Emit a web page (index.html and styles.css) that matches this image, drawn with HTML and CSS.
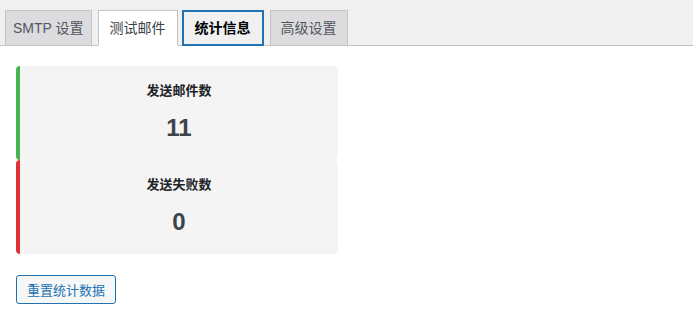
FILE: index.html
```html
<!DOCTYPE html>
<html lang="zh-CN">
<head>
  <meta charset="UTF-8">
  <meta name="viewport" content="width=device-width, initial-scale=1.0">
  <title>统计信息</title>
  <link rel="stylesheet" href="styles.css">
</head>
<body>

  <nav class="tab-bar">
    <a class="tab">SMTP 设置</a>
    <a class="tab tab-light">测试邮件</a>
    <a class="tab tab-active">统计信息</a>
    <a class="tab">高级设置</a>
  </nav>

  <div class="stats">
    <div class="stat-card stat-sent">
      <h3>发送邮件数</h3>
      <p class="stat-num">11</p>
    </div>
    <div class="stat-card stat-failed">
      <h3>发送失败数</h3>
      <p class="stat-num">0</p>
    </div>
  </div>

  <button class="reset-btn">重置统计数据</button>

</body>
</html>
```

FILE: styles.css
```css
body {
  margin: 0;
  background-color: #fff;
  color: #1d2327;
  font-family: "Noto Sans CJK SC", "Noto Sans", sans-serif;
}

.tab-bar {
  display: flex;
  gap: 6px;
  padding: 10px 0 0 5px;
  background-color: #f0f0f1;
  border-bottom: 1px solid #c3c4c7;
  box-sizing: border-box;
  height: 46px;
}

.tab {
  display: block;
  padding: 0 11px;
  height: 36px;
  line-height: 34px;
  font-family: "Liberation Sans", "Noto Sans CJK SC", sans-serif;
  font-size: 14px;
  color: #50575e;
  background-color: #dcdcde;
  border: 1px solid #c3c4c7;
  box-sizing: border-box;
  margin-bottom: -1px;
}

.tab:first-child {
  padding: 0 7px;
}

.tab:last-child {
  padding: 0 10px;
}

.tab-light {
  background-color: #fff;
  border-bottom-color: #fff;
  color: #3c434a;
}

.tab-active {
  background-color: #f0f0f1;
  border: 2px solid #2271b1;
  line-height: 32px;
  color: #000;
  font-weight: bold;
  margin-left: -2px;
}

.stats {
  margin: 20px 0 0 16px;
  width: 322px;
}

.stat-card {
  background-color: #f4f4f4;
  border-left: 4px solid #46b450;
  border-radius: 4px;
  height: 94px;
  box-sizing: border-box;
  padding-top: 15px;
  text-align: center;
}

.stat-failed {
  border-left-color: #dc3232;
}

.stat-card h3 {
  margin: 0;
  font-size: 13px;
  line-height: 18px;
  font-weight: 600;
  color: #1d2327;
}

.stat-num {
  margin: 14px 0 0;
  font-family: "Liberation Sans", sans-serif;
  font-size: 24px;
  line-height: 30px;
  font-weight: bold;
  color: #3c434a;
}

.reset-btn {
  display: block;
  margin: 21px 0 0 16px;
  width: 100px;
  height: 29px;
  padding: 0;
  font-family: "Noto Sans CJK SC", sans-serif;
  font-size: 13px;
  color: #2271b1;
  background-color: #f6f7f7;
  border: 1px solid #2271b1;
  border-radius: 3px;
  cursor: pointer;
}
```
